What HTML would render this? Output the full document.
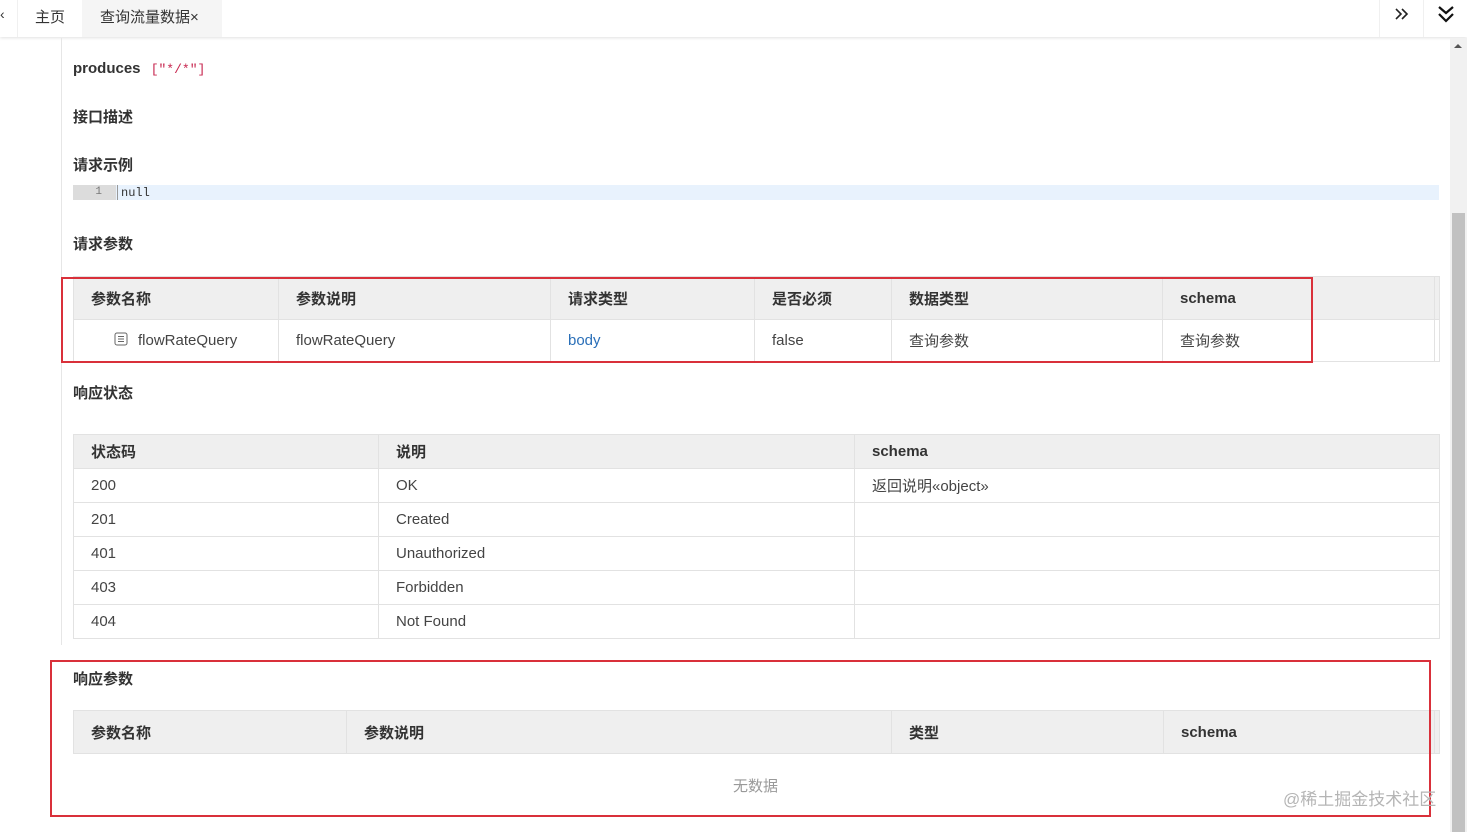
<!DOCTYPE html>
<html><head><meta charset="utf-8"><style>
*{margin:0;padding:0;box-sizing:border-box}
body{width:1467px;height:832px;overflow:hidden;background:#fff;font-family:"Liberation Sans","Noto Sans CJK SC",sans-serif;color:#333;position:relative;font-size:14px}
.a{position:absolute}
.h{font-weight:bold;font-size:15px;color:#333}
table{position:absolute;border-collapse:collapse;font-size:15px;table-layout:fixed}
td,th{border:1px solid #e2e2e2;padding:0 0 0 17px;text-align:left;white-space:nowrap}
th{background:#efefef;font-weight:bold;color:#333}
td{color:#444}
.red{position:absolute;border:2px solid #d9303a}
</style></head><body>
<div class="a" style="left:0;top:0;width:1467px;height:37px;background:#fff;box-shadow:0 1px 3px rgba(0,0,0,.12)"></div>
<div class="a" style="left:0;top:6px;font-size:14px">&#8249;</div>
<div class="a" style="left:17px;top:0;width:65px;height:37px;border-left:1px solid #f0f0f0;"></div>
<div class="a" style="left:35px;top:6px;font-size:15px;color:#333">主页</div>
<div class="a" style="left:82px;top:0;width:140px;height:37px;background:#f5f5f5"></div>
<div class="a" style="left:100px;top:6px;font-size:15px;color:#333">查询流量数据×</div>
<div class="a" style="left:1379px;top:0;width:1px;height:37px;background:#f0f0f0"></div>
<div class="a" style="left:1423px;top:0;width:1px;height:37px;background:#f0f0f0"></div>
<svg class="a" style="left:1394px;top:7px" width="16" height="14"><path d="M2 2l5 5-5 5M8 2l5 5-5 5" stroke="#222" stroke-width="1.6" fill="none"/></svg>
<svg class="a" style="left:1437px;top:5px" width="18" height="18"><path d="M2 2l7 6 7-6M2 9l7 7 7-7" stroke="#111" stroke-width="2.2" fill="none"/></svg>
<div class="a" style="left:1450px;top:38px;width:17px;height:794px;background:#f1f1f1"></div>
<div class="a" style="left:1452px;top:213px;width:13px;height:619px;background:#c1c1c1"></div>
<div class="a" style="left:1454px;top:44px;width:0;height:0;border-left:4px solid transparent;border-right:4px solid transparent;border-bottom:4px solid #555"></div>
<div class="a" style="left:61px;top:38px;width:1px;height:607px;background:#e6e6e6"></div>

<div class="a h" style="left:73px;top:60px;font-size:15px">produces <span style="font-family:'Liberation Mono',monospace;font-weight:normal;color:#c7254e;font-size:13px;margin-left:6px">["*/*"]</span></div>
<div class="a h" style="left:73px;top:106px">接口描述</div>
<div class="a h" style="left:73px;top:154px">请求示例</div>
<div class="a" style="left:73px;top:185px;width:1366px;height:15px;background:#e8f2fd"></div>
<div class="a" style="left:73px;top:185px;width:43px;height:15px;background:#dcdcdc;font-family:'Liberation Mono',monospace;font-size:11px;color:#777;text-align:right;padding-right:14px;line-height:15px">1</div>
<div class="a" style="left:117px;top:185px;width:1px;height:15px;background:#999"></div>
<div class="a" style="left:121px;top:186px;font-family:'Liberation Mono',monospace;font-size:12px;line-height:15px;color:#333">null</div>
<div class="a h" style="left:73px;top:233px">请求参数</div>

<table style="left:73px;top:276px;width:1366px">
<colgroup><col style="width:205px"><col style="width:272px"><col style="width:204px"><col style="width:137px"><col style="width:271px"><col style="width:272px"><col style="width:5px"></colgroup>
<tr style="height:43px"><th>参数名称</th><th>参数说明</th><th>请求类型</th><th>是否必须</th><th>数据类型</th><th>schema</th><th style="padding:0"></th></tr>
<tr style="height:42px"><td style="padding-left:40px"><svg width="14" height="14" style="vertical-align:-1px;margin-right:10px"><rect x="1" y="1" width="12" height="12" rx="2" fill="none" stroke="#666"/><path d="M4 4.5h6M4 7h6M4 9.5h6" stroke="#666"/></svg>flowRateQuery</td><td>flowRateQuery</td><td style="color:#2a6fb8">body</td><td>false</td><td>查询参数</td><td>查询参数</td><td style="padding:0"></td></tr>
</table>
<div class="red" style="left:61px;top:277px;width:1252px;height:86px"></div>

<div class="a h" style="left:73px;top:382px">响应状态</div>
<table style="left:73px;top:434px;width:1366px">
<colgroup><col style="width:305px"><col style="width:476px"><col style="width:585px"></colgroup>
<tr style="height:34px"><th>状态码</th><th>说明</th><th>schema</th></tr>
<tr style="height:34px"><td>200</td><td>OK</td><td>返回说明«object»</td></tr>
<tr style="height:34px"><td>201</td><td>Created</td><td></td></tr>
<tr style="height:34px"><td>401</td><td>Unauthorized</td><td></td></tr>
<tr style="height:34px"><td>403</td><td>Forbidden</td><td></td></tr>
<tr style="height:34px"><td>404</td><td>Not Found</td><td></td></tr>
</table>

<div class="a h" style="left:73px;top:668px">响应参数</div>
<table style="left:73px;top:710px;width:1366px">
<colgroup><col style="width:273px"><col style="width:545px"><col style="width:272px"><col style="width:271px"><col style="width:5px"></colgroup>
<tr style="height:43px"><th>参数名称</th><th>参数说明</th><th>类型</th><th>schema</th><th style="padding:0"></th></tr>
</table>
<div class="a" style="left:733px;top:775px;color:#999;font-size:15px">无数据</div>
<div class="red" style="left:50px;top:660px;width:1381px;height:157px"></div>
<div class="a" style="left:1283px;top:785px;color:#b5b5b5;font-size:17px">@稀土掘金技术社区</div>
</body></html>
